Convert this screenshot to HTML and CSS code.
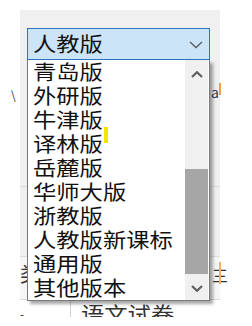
FILE: index.html
```html
<!DOCTYPE html>
<html lang="zh-CN">
<head>
    <meta charset="UTF-8">
    <title>教材版本</title>
    <link rel="stylesheet" href="styles.css">
</head>
<body>
<div class="page">
    <!-- 背景表单 -->
    <div class="panel">
        <div class="row row-top">
            <span class="mark-dark">a</span>
            <span class="mark-orange"></span>
        </div>
        <div class="row row-mid"></div>
        <div class="row row-low">
            <span class="frag-left">类</span>
            <span class="frag-right">三</span>
            <span class="mark-orange low"></span>
        </div>
    </div>
    <div class="grid">
        <div class="cell first">-</div>
        <div class="cell"><span class="t">语文试卷</span></div>
    </div>
    <span class="slash">\</span>

    <!-- 下拉框 -->
    <div class="select">
        <span class="t">人教版</span>
        <svg class="caret" width="14" height="8" viewBox="0 0 14 8">
            <polyline points="1,1 7,6.5 13,1" fill="none" stroke="#5c5c5c" stroke-width="1.3"/>
        </svg>
    </div>
    <div class="list">
        <ul class="items">
            <li><span class="t">青岛版</span></li>
            <li><span class="t">外研版</span></li>
            <li><span class="t">牛津版</span></li>
            <li><span class="t">译林版</span></li>
            <li><span class="t">岳麓版</span></li>
            <li><span class="t">华师大版</span></li>
            <li><span class="t">浙教版</span></li>
            <li><span class="t">人教版新课标</span></li>
            <li><span class="t">通用版</span></li>
            <li><span class="t">其他版本</span></li>
        </ul>
        <span class="cursor-mark"></span>
        <div class="scrollbar">
            <div class="arrow up">
                <svg width="12" height="7" viewBox="0 0 12 7">
                    <polyline points="1,6 6,1.2 11,6" fill="none" stroke="#606060" stroke-width="2.2"/>
                </svg>
            </div>
            <div class="track"></div>
            <div class="thumb"></div>
            <div class="arrow down">
                <svg width="12" height="7" viewBox="0 0 12 7">
                    <polyline points="1,1 6,5.8 11,1" fill="none" stroke="#606060" stroke-width="2.2"/>
                </svg>
            </div>
        </div>
    </div>
</div>
</body>
</html>
```

FILE: styles.css
```css
body {
    margin: 0;
    background: #fff;
    font-family: "Noto Sans CJK SC", "Noto Sans", sans-serif;
    color: #111;
}
.page {
    position: relative;
    width: 252px;
    height: 326px;
    overflow: hidden;
}
.t {
    display: inline-block;
    transform: scaleX(1.165);
    transform-origin: left center;
    white-space: nowrap;
}
.panel {
    margin: 10px 0 0 20px;
    width: 200px;
    background: #f0f0f0;
}
.row {
    position: relative;
    border-bottom: 1px solid #dcdcdc;
}
.row-top {
    height: 176px;
}
.row-mid {
    height: 69px;
}
.row-low {
    height: 42px;
    background: #f6f6f6;
}
.mark-dark {
    position: absolute;
    left: 191px;
    top: 72px;
    font-size: 14px;
    color: #2d3a5a;
}
.mark-orange {
    position: absolute;
    left: 199px;
    top: 73px;
    width: 2px;
    height: 12px;
    background: #f0a040;
}
.mark-orange.low {
    top: 5px;
    height: 22px;
    background: #f5b060;
}
.frag-left {
    position: absolute;
    left: 0;
    top: 2px;
    font-size: 20px;
    color: #333;
}
.frag-right {
    position: absolute;
    left: 192px;
    top: 6px;
    font-size: 16px;
    color: #333;
}
.grid {
    display: flex;
    margin-left: 20px;
    width: 200px;
    height: 17px;
    overflow: hidden;
}
.cell {
    font-size: 20px;
    line-height: 20px;
    padding: 4px 0 0 10px;
    color: #333;
}
.cell.first {
    width: 50px;
    padding-left: 0;
    border-right: 1px solid #cfcfcf;
    font-size: 12px;
}
.slash {
    position: absolute;
    left: 11px;
    top: 86px;
    font-size: 12px;
    color: #333;
}
.select {
    position: absolute;
    left: 27px;
    top: 28px;
    width: 183px;
    height: 32px;
    box-sizing: border-box;
    border: 1px solid #2f75bd;
    background: #cce4f7;
    display: flex;
    align-items: center;
    justify-content: space-between;
    padding: 0 6px 0 5px;
    font-size: 20px;
    line-height: 30px;
}
.caret {
    margin-top: 2px;
}
.list {
    position: absolute;
    left: 27px;
    top: 60px;
    width: 183px;
    height: 241px;
    box-sizing: border-box;
    border: 1px solid #7a7a7a;
    border-top: none;
    background: #fff;
    box-shadow: 3px 3px 3px rgba(0, 0, 0, 0.35);
    display: flex;
}
.items {
    flex: 1;
    list-style: none;
    margin: 0;
    padding: 0 0 0 5px;
    font-size: 20px;
    line-height: 24px;
}
.cursor-mark {
    position: absolute;
    left: 76px;
    top: 67px;
    width: 4px;
    height: 16px;
    background: #f2e600;
}
.scrollbar {
    width: 23px;
    margin-right: 1px;
    background: #f0f0f0;
    display: flex;
    flex-direction: column;
}
.arrow {
    display: flex;
    justify-content: center;
    align-items: center;
    height: 22px;
}
.arrow.up {
    align-items: flex-start;
    padding-top: 11px;
    height: 11px;
}
.track {
    height: 87px;
}
.thumb {
    height: 105px;
    background: #a6a6a6;
}
.arrow.down {
    flex: 1;
    padding-top: 2px;
}
```
